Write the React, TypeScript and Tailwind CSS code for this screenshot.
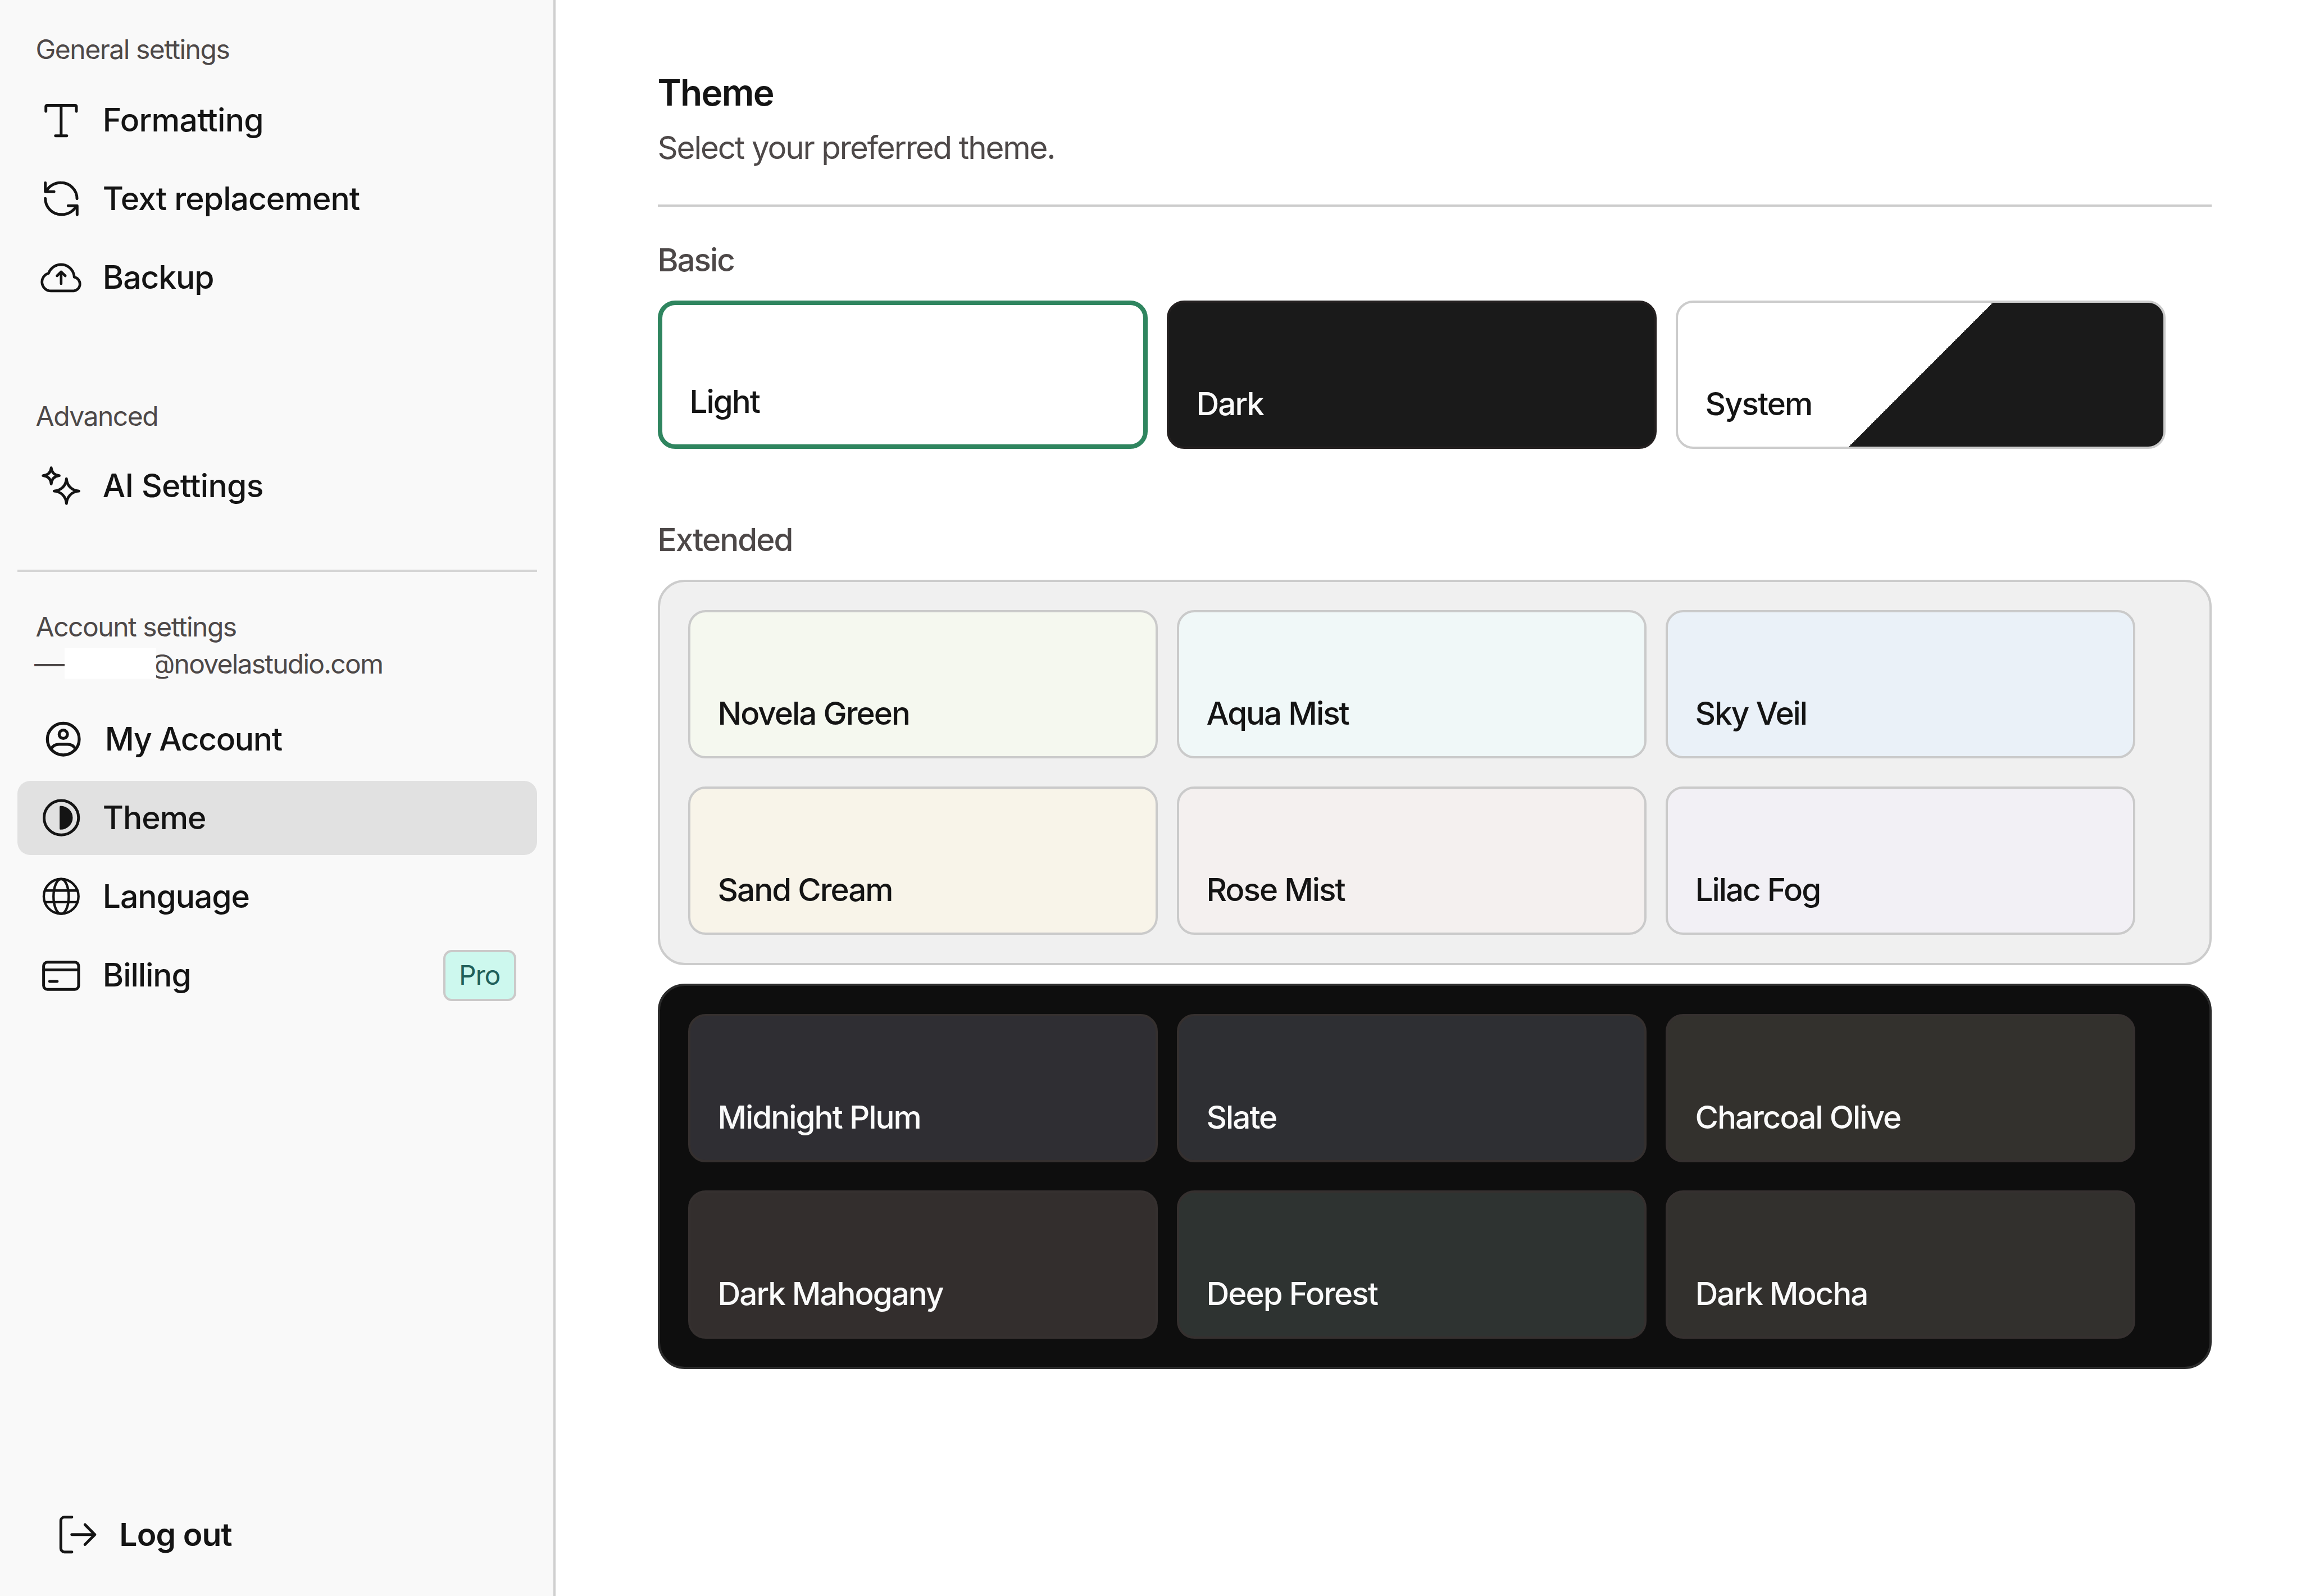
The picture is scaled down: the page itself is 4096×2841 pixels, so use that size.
import type { ReactNode } from "react";

function Icon({ children, stroke = 6.6 }: { children: ReactNode; stroke?: number }) {
  return (
    <svg
      viewBox="0 0 100 100"
      className="h-[75.35px] w-[75.35px] shrink-0"
      fill="none"
      stroke="currentColor"
      strokeWidth={stroke}
      strokeLinecap="round"
      strokeLinejoin="round"
    >
      {children}
    </svg>
  );
}

const FormattingIcon = () => (
  <Icon>
    <path d="M14.2 29.5V18.2a3 3 0 0 1 3-3H83.2a3 3 0 0 1 3 3V29.5M50.2 15.2V87.2M36.8 87.2H63.6" />
  </Icon>
);

const ReplaceIcon = () => (
  <Icon>
    <path d="M87.7 50A37.6 37.6 0 0 0 50.2 12.4A38 38 0 0 0 14.8 33M12.8 12.5V33.5H33.5" />
    <path d="M12.8 49.5A37.6 37.6 0 0 0 50.4 87.3A38 38 0 0 0 86 67.2M88 88V66.8H66.8" />
  </Icon>
);

const BackupIcon = () => (
  <Icon stroke={6.2}>
    <path d="M26 82.2A21.3 21.3 0 0 1 20.5 40.4A31.3 31.3 0 0 1 81.2 49.5A16.6 16.6 0 0 1 80.5 82.2Z" />
    <path d="M50.2 65V37M40.5 46.4L50.2 37L60 46.4" />
  </Icon>
);

const SparklesIcon = () => (
  <Icon stroke={6.4}>
    <path d="M26.8 7.5C27.8 18.5 34.5 25 45.8 26.1C34.5 27.3 27.8 34.5 26.8 45.8C25.8 34.5 19 27.3 7.5 26.1C19 25 25.8 18.5 26.8 7.5Z" />
    <path d="M62.8 33.5C64 50 75.5 61.5 92.3 62.5C75.5 63.6 64 75.5 62.8 92C61.6 75.5 50 63.6 33.5 62.5C50 61.5 61.6 50 62.8 33.5Z" />
  </Icon>
);

const AccountIcon = () => (
  <Icon stroke={7}>
    <circle cx="50" cy="50" r="37.6" />
    <circle cx="50" cy="38.6" r="9.8" />
    <path d="M21 74C25 65.5 31 62.2 40 62.2H60C69 62.2 75 65.5 79 74" />
  </Icon>
);

const ThemeIcon = () => (
  <Icon>
    <circle cx="50.6" cy="50" r="40.7" />
    <path
      d="M46.6 24.5Q46.6 22 49 22A28.6 28 0 0 1 49 78Q46.6 78 46.6 75.5Z"
      fill="currentColor"
      stroke="none"
    />
  </Icon>
);

const LanguageIcon = () => (
  <Icon stroke={5.8}>
    <circle cx="50.2" cy="50" r="41" />
    <ellipse cx="50.2" cy="50" rx="18" ry="41" />
    <path d="M12 36.2H88.4M12 63.6H88.4" />
  </Icon>
);

const BillingIcon = () => (
  <Icon>
    <rect x="8.8" y="18.2" width="82.7" height="64.3" rx="9" />
    <path d="M9 36.4H91M23 63.8H41" />
  </Icon>
);

const LogoutIcon = () => (
  <Icon>
    <path d="M35.8 8.7H18.2a8.5 8.5 0 0 0-8.5 8.5V82.7a8.5 8.5 0 0 0 8.5 8.5H35.8" />
    <path d="M35.5 50H90M66.8 26.5L90 50L66.8 73.5" />
  </Icon>
);

function SectionLabel({ children }: { children: ReactNode }) {
  return (
    <div className="pl-[63.5px] text-[48px] leading-[66px] tracking-[-0.031em] text-[#4d4848]">{children}</div>
  );
}

interface NavItemProps {
  icon: ReactNode;
  label: string;
  tracking?: string;
  active?: boolean;
  shifted?: boolean;
  badge?: string;
}

function NavItem({ icon, label, tracking = "tracking-[-0.019em]", active, shifted, badge }: NavItemProps) {
  return (
    <button
      className={`mr-[29.5px] ml-[31px] flex h-[132px] items-center gap-[36.5px] rounded-[23px] pr-[37px] text-left text-[57px] leading-[60px] font-medium text-[#141414] ${
        shifted ? "pl-[44px]" : "pl-[40px]"
      } ${active ? "bg-[#e1e1e1]" : ""}`}
    >
      {icon}
      <span className={`flex-1 ${tracking}`}>{label}</span>
      {badge && (
        <span className="flex h-[91px] w-[130px] items-center justify-center rounded-[15px] border-4 border-[#cbc9c9] bg-[#cdf8ee] text-[48px] font-normal tracking-[-0.025em] text-[#20605a]">
          {badge}
        </span>
      )}
    </button>
  );
}

function Sidebar() {
  return (
    <aside className="flex w-[989px] shrink-0 flex-col border-r-4 border-[#cfcfcf] bg-[#f9f9f9] pt-[55px]">
      <SectionLabel>General settings</SectionLabel>
      <nav className="mt-[26.5px] flex flex-col gap-[8.25px]">
        <NavItem icon={<FormattingIcon />} label="Formatting" tracking="tracking-[-0.012em]" />
        <NavItem icon={<ReplaceIcon />} label="Text replacement" tracking="tracking-[-0.017em]" />
        <NavItem icon={<BackupIcon />} label="Backup" />
      </nav>

      <div className="mt-[147.5px]">
        <SectionLabel>Advanced</SectionLabel>
      </div>
      <nav className="mt-[25.5px] flex flex-col">
        <NavItem icon={<SparklesIcon />} label="AI Settings" tracking="tracking-[-0.012em]" />
      </nav>

      <div className="mr-[29.5px] ml-[31px] mt-[82.5px] h-1 shrink-0 bg-[#d5d5d5]" />

      <div className="mt-[65.5px]">
        <SectionLabel>Account settings</SectionLabel>
        <div className="flex h-[66px] items-center pl-[61px] text-[48px] leading-[66px] tracking-[-0.037em] text-[#4d4848]">
          <span className="w-[54px] whitespace-nowrap">——</span>
          <span className="relative z-10 mb-[4px] h-[55px] w-[163px] shrink-0 bg-white" />
          <span className="-ml-[13px]">@novelastudio.com</span>
        </div>
      </div>
      <nav className="mt-[34.5px] flex flex-col gap-[8.25px]">
        <NavItem icon={<AccountIcon />} label="My Account" tracking="tracking-[-0.024em]" shifted />
        <NavItem icon={<ThemeIcon />} label="Theme" active />
        <NavItem icon={<LanguageIcon />} label="Language" />
        <NavItem icon={<BillingIcon />} label="Billing" badge="Pro" />
      </nav>

      <button className="mt-auto mb-[43.5px] flex h-[132px] items-center gap-[36px] pl-[101px] text-[57px] leading-[60px] font-semibold tracking-[-0.016em] text-[#141414]">
        <LogoutIcon />
        <span>Log out</span>
      </button>
    </aside>
  );
}

const basicThemes = [
  { name: "Light", style: "border-8 border-[#2f855f] bg-white text-[#141414]" },
  { name: "Dark", style: "border-4 border-[#242020] bg-[#1a1a1a] text-[#fafafa]" },
  {
    name: "System",
    style: "border-4 border-[#cccccc] bg-[linear-gradient(135deg,#ffffff_50%,#1a1a1a_50%)] text-[#141414]",
  },
];

const lightThemes = [
  { name: "Novela Green", style: "bg-[#f5f8ef]" },
  { name: "Aqua Mist", style: "bg-[#f0f8f8]" },
  { name: "Sky Veil", style: "bg-[#eaf1f8]" },
  { name: "Sand Cream", style: "bg-[#f8f4e9]" },
  { name: "Rose Mist", style: "bg-[#f4f0ef]" },
  { name: "Lilac Fog", style: "bg-[#f2f0f5]" },
];

const darkThemes = [
  { name: "Midnight Plum", style: "bg-[#2f2e33]" },
  { name: "Slate", style: "bg-[#2e2f33]" },
  { name: "Charcoal Olive", style: "bg-[#33312d]" },
  { name: "Dark Mahogany", style: "bg-[#332e2d]" },
  { name: "Deep Forest", style: "bg-[#2e3331]" },
  { name: "Dark Mocha", style: "bg-[#32302d]" },
];

function ThemeCard({ name, style }: { name: string; style: string }) {
  return (
    <button
      className={`flex h-[264px] items-end rounded-[31px] pb-[46px] pl-[49px] text-left text-[56.5px] leading-[60px] font-medium tracking-[-0.035em] ${style}`}
    >
      {name}
    </button>
  );
}

function ThemeGroup({ dark = false }: { dark?: boolean }) {
  const themes = dark ? darkThemes : lightThemes;
  return (
    <div
      className={`grid w-[2766px] grid-cols-[836px_836px_836px] gap-x-[34px] gap-y-[50px] rounded-[48px] border-4 p-[50px] ${
        dark ? "border-[#2b2b2b] bg-[#0e0e0e]" : "border-[#cccccc] bg-[#f0f0f0]"
      }`}
    >
      {themes.map((theme) => (
        <ThemeCard
          key={theme.name}
          name={theme.name}
          style={`border-4 ${dark ? "border-[#35302f] text-[#fafafa]" : "border-[#cacaca] text-[#141414]"} ${theme.style}`}
        />
      ))}
    </div>
  );
}

export default function App() {
  return (
    <div className="flex h-[2841px] w-[4096px] overflow-hidden bg-white font-['Inter',sans-serif]">
      <Sidebar />
      <main className="flex flex-1 flex-col pt-[124.5px] pl-[181.5px]">
        <h1 className="text-[64px] leading-[80px] font-semibold tracking-[-0.026em] text-[#141414]">Theme</h1>
        <p className="mt-[28px] text-[56.5px] leading-[60px] tracking-[-0.038em] text-[#4d4848]">
          Select your preferred theme.
        </p>
        <div className="mt-[71px] h-1 w-[2766px] bg-[#cccccc]" />

        <h2 className="mt-[65.5px] text-[56.5px] leading-[60px] font-medium tracking-[-0.036em] text-[#4d4848]">
          Basic
        </h2>
        <div className="mt-[41.5px] grid grid-cols-[872px_872px_872px] gap-[34px]">
          {basicThemes.map((theme) => (
            <ThemeCard key={theme.name} name={theme.name} style={theme.style} />
          ))}
        </div>

        <h2 className="mt-[132.5px] text-[56.5px] leading-[60px] font-medium tracking-[-0.034em] text-[#4d4848]">
          Extended
        </h2>
        <div className="mt-[41px] flex flex-col gap-[33px]">
          <ThemeGroup />
          <ThemeGroup dark />
        </div>
      </main>
    </div>
  );
}
